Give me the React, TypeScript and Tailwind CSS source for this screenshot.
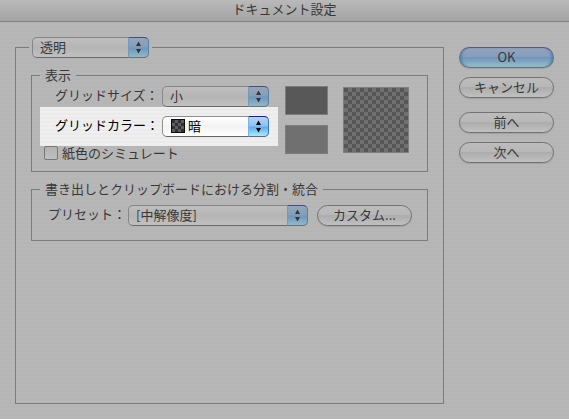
import type { ReactNode } from "react";

const STRIPES =
  "bg-[repeating-linear-gradient(to_bottom,#b7b7b7_0px,#b7b7b7_2px,#b5b5b5_2px,#b5b5b5_4px)]";

const CHECKER =
  "bg-[conic-gradient(#707070_25%,#575757_0_50%,#707070_0_75%,#575757_0)] bg-[size:8px_8px]";

type PopupProps = {
  id: string;
  label?: string;
  options: string[];
  className: string;
  bright?: boolean;
  swatch?: ReactNode;
};

function Popup({ id, label, options, className, bright, swatch }: PopupProps) {
  return (
    <div className={`relative h-[21px] ${className}`}>
      <select
        id={id}
        aria-label={label}
        className={`block h-[21px] w-full appearance-none rounded-[5px] border pr-7 pb-[2px] text-[13px] leading-[17px] outline-none ${
          swatch ? "pl-[25px]" : "pl-[7px]"
        } ${
          bright
            ? "border-[#8e8e8e] border-b-[#666] bg-linear-to-b from-white via-[#f3f3f3] to-white text-black"
            : "border-[#868686] border-b-[#6a6a6a] bg-linear-to-b from-[#bfbfbf] via-[#b5b5b5] to-[#c0c0c0] text-[#383838]"
        }`}
      >
        {options.map((option) => (
          <option key={option}>{option}</option>
        ))}
      </select>
      {swatch}
      <span
        className={`pointer-events-none absolute top-0 right-0 flex h-[21px] w-[21px] items-center justify-center rounded-r-[5px] border ${
          bright
            ? "border-[#3a78bd] border-t-[#17247c] border-b-[#5e6a75] border-l-[#79b0e6] bg-[linear-gradient(to_bottom,#b3d3f3_0%,#8fc0f0_48%,#5fa9ee_52%,#a5ecff_100%)] text-black"
            : "border-[#5880a6] border-t-[#4c4c80] border-b-[#66757d] border-l-[#7898b8] bg-[linear-gradient(to_bottom,#94a6b8_0%,#839db8_48%,#6d96be_52%,#91b9c2_100%)] text-[#353535]"
        }`}
      >
        <svg width="7" height="13" viewBox="0 0 7 13" fill="currentColor" aria-hidden="true">
          <path d="M3.5 0.5 6 5H1zM3.5 12.5 1 8h5z" />
        </svg>
      </span>
    </div>
  );
}

function PushButton({ children, primary }: { children: ReactNode; primary?: boolean }) {
  return (
    <button
      type="button"
      className={`h-[21px] w-[95px] shrink-0 rounded-full border pb-[2px] text-center text-[13px] leading-[17px] text-[#383838] shadow-[0_1px_1px_#a2a2a2] ${
        primary
          ? "border-[#5f7488] border-t-[#58568c] bg-[linear-gradient(to_bottom,#94a2ba_0%,#849fbe_45%,#6f95bd_50%,#96bec6_100%)] inset-shadow-[3px_0_3px_-2px_#4476a5,-3px_0_3px_-2px_#4476a5]"
          : "border-[#727272] bg-[linear-gradient(to_bottom,#bcbcbc_0%,#b8b8b8_45%,#adadad_50%,#c0c0c0_100%)]"
      }`}
    >
      {children}
    </button>
  );
}

function Group({ title, children }: { title: string; children: ReactNode }) {
  return (
    <fieldset className="min-w-0 border border-[#7b7b7b] px-2">
      <legend className="px-[5px] pb-[2px] leading-[19px]">{title}</legend>
      {children}
    </fieldset>
  );
}

export default function App() {
  return (
    <div
      className={`flex min-h-screen flex-col font-['Noto_Sans_CJK_JP',sans-serif] text-[13px] text-[#383838] ${STRIPES}`}
    >
      <header className="h-[22px] border-b border-[#838383] bg-linear-to-b from-[#b9b9b9] to-[#a4a4a4]">
        <h1 className="text-center leading-[18px]">ドキュメント設定</h1>
      </header>

      <main className="flex flex-1 gap-[15px] p-[15px]">
        <fieldset className="min-w-0 flex-1 border border-[#7b7b7b] px-[13px]">
          <legend className="px-[3px]">
            <Popup id="section" label="設定項目" options={["透明"]} className="w-[117px]" />
          </legend>

          <div className="flex flex-col gap-[7px] px-[2px] pt-[7px]">
            <Group title="表示">
              <div className="flex gap-[7px] pb-[9px]">
                <div>
                  <div className="flex gap-[3px] pr-[9px] pl-[15px]">
                    <label htmlFor="grid-size" className="w-[104px] leading-[18px]">
                      グリッドサイズ：
                    </label>
                    <Popup id="grid-size" options={["小"]} className="w-[107px]" />
                  </div>
                  <div className="flex gap-[3px] bg-[repeating-linear-gradient(to_bottom,#efefef_0px,#efefef_2px,#ebebeb_2px,#ebebeb_4px)] py-[9px] pr-[9px] pl-[15px] text-black">
                    <label htmlFor="grid-color" className="w-[104px] leading-[18px]">
                      グリッドカラー：
                    </label>
                    <Popup
                      id="grid-color"
                      options={["暗"]}
                      className="w-[107px]"
                      bright
                      swatch={
                        <svg
                          className="pointer-events-none absolute top-[3px] left-[9px]"
                          width="14"
                          height="14"
                          viewBox="0 0 14 14"
                          shapeRendering="crispEdges"
                          aria-hidden="true"
                        >
                          <path fill="#0c0c0c" d="M0 0h14v14H0z" />
                          <path fill="#5e5e5e" d="M1 1h12v12H1z" />
                          <path
                            fill="#303036"
                            d="M1 1h3v3H1zM7 1h3v3H7zM4 4h3v3H4zM10 4h3v3h-3zM1 7h3v3H1zM7 7h3v3H7zM4 10h3v3H4zM10 10h3v3h-3z"
                          />
                        </svg>
                      }
                    />
                  </div>
                  <div className="flex h-4 gap-1 pl-1">
                    <input
                      id="simulate-paper"
                      type="checkbox"
                      className="h-[14px] w-[14px] appearance-none rounded-[2px] border border-[#777] bg-linear-to-b from-[#b2b2b2] to-[#bfbfbf] checked:bg-[#6d96be]"
                    />
                    <label htmlFor="simulate-paper" className="leading-[14px]">
                      紙色のシミュレート
                    </label>
                  </div>
                </div>

                <div className="flex items-center gap-[15px] self-start">
                  <div className="flex flex-col gap-[10px]">
                    <button
                      type="button"
                      aria-label="グリッドカラー 1"
                      className="h-[29px] w-[43px] border border-[#7d7d7d] bg-[#585858]"
                    />
                    <button
                      type="button"
                      aria-label="グリッドカラー 2"
                      className="h-[29px] w-[43px] border border-[#7d7d7d] bg-[#707070]"
                    />
                  </div>
                  <div className="border border-[#7d7d7d]">
                    <div className={`h-16 w-16 ${CHECKER}`} />
                  </div>
                </div>
              </div>
            </Group>

            <Group title="書き出しとクリップボードにおける分割・統合">
              <div className="flex pt-[5px] pr-[7px] pb-[14px] pl-2">
                <label htmlFor="preset" className="w-20 leading-[18px]">
                  プリセット：
                </label>
                <Popup id="preset" options={["[中解像度]"]} className="mr-[9px] flex-1" />
                <PushButton>カスタム...</PushButton>
              </div>
            </Group>
          </div>
        </fieldset>

        <div className="flex flex-col gap-[14px] pt-[10px]">
          <div className="flex flex-col gap-[9px]">
            <PushButton primary>OK</PushButton>
            <PushButton>キャンセル</PushButton>
          </div>
          <div className="flex flex-col gap-[9px]">
            <PushButton>前へ</PushButton>
            <PushButton>次へ</PushButton>
          </div>
        </div>
      </main>
    </div>
  );
}
